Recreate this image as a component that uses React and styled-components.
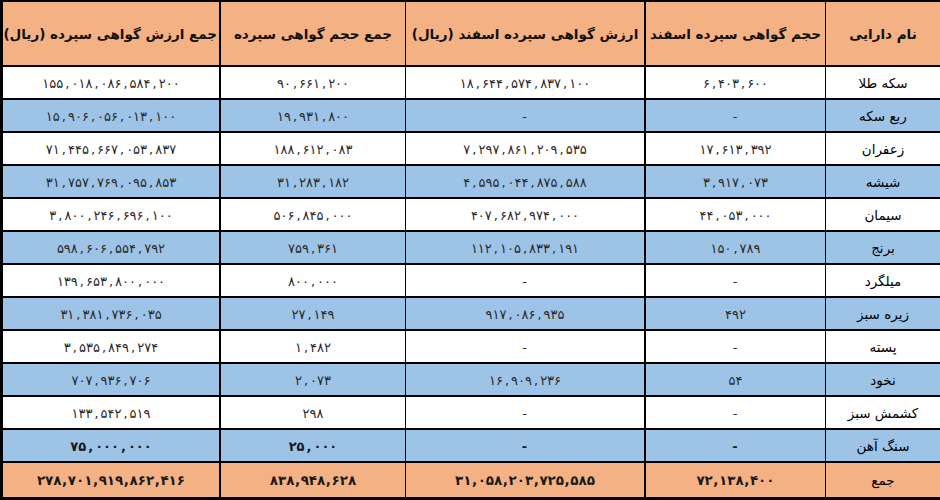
import React from 'react';
import styled, { createGlobalStyle } from 'styled-components';

const GlobalStyle = createGlobalStyle`
  html, body {
    margin: 0;
    padding: 0;
    background: #ffffff;
  }
  * {
    box-sizing: border-box;
  }
`;

// Excel-like palette
const ORANGE = '#f4b183';
const BLUE = '#9dc3e6';

const columns = [
  { key: 'name', title: 'نام دارایی', width: 115, edge: 1 },
  { key: 'volEsfand', title: 'حجم گواهی سپرده اسفند', width: 181, edge: 2 },
  { key: 'valEsfand', title: 'ارزش گواهی سپرده اسفند (ریال)', width: 239, edge: 1 },
  { key: 'volTotal', title: 'جمع حجم گواهی سپرده', width: 186, edge: 2 },
  { key: 'valTotal', title: 'جمع ارزش گواهی سپرده (ریال)', width: 219, edge: 3 },
];

const rows = [
  ['سکه طلا', '۶,۴۰۳,۶۰۰', '۱۸,۶۴۴,۵۷۴,۸۳۷,۱۰۰', '۹۰,۶۶۱,۲۰۰', '۱۵۵,۰۱۸,۰۸۶,۵۸۴,۲۰۰'],
  ['ربع سکه', '-', '-', '۱۹,۹۳۱,۸۰۰', '۱۵,۹۰۶,۰۵۶,۰۱۳,۱۰۰'],
  ['زعفران', '۱۷,۶۱۳,۳۹۲', '۷,۲۹۷,۸۶۱,۲۰۹,۵۳۵', '۱۸۸,۶۱۲,۰۸۳', '۷۱,۴۴۵,۶۶۷,۰۵۳,۸۳۷'],
  ['شیشه', '۳,۹۱۷,۰۷۳', '۴,۵۹۵,۰۴۴,۸۷۵,۵۸۸', '۳۱,۲۸۳,۱۸۲', '۳۱,۷۵۷,۷۶۹,۰۹۵,۸۵۳'],
  ['سیمان', '۴۴,۰۵۳,۰۰۰', '۴۰۷,۶۸۲,۹۷۴,۰۰۰', '۵۰۶,۸۴۵,۰۰۰', '۳,۸۰۰,۲۴۶,۶۹۶,۱۰۰'],
  ['برنج', '۱۵۰,۷۸۹', '۱۱۲,۱۰۵,۸۳۳,۱۹۱', '۷۵۹,۳۶۱', '۵۹۸,۶۰۶,۵۵۴,۷۹۲'],
  ['میلگرد', '-', '-', '۸۰۰,۰۰۰', '۱۳۹,۶۵۳,۸۰۰,۰۰۰'],
  ['زیره سبز', '۴۹۲', '۹۱۷,۰۸۶,۹۳۵', '۲۷,۱۴۹', '۳۱,۳۸۱,۷۳۶,۰۳۵'],
  ['پسته', '-', '-', '۱,۴۸۲', '۳,۵۳۵,۸۴۹,۲۷۴'],
  ['نخود', '۵۴', '۱۶,۹۰۹,۲۳۶', '۲,۰۷۳', '۷۰۷,۹۳۶,۷۰۶'],
  ['کشمش سبز', '-', '-', '۲۹۸', '۱۳۳,۵۴۲,۵۱۹'],
  ['سنگ آهن', '-', '-', '۲۵,۰۰۰', '۷۵,۰۰۰,۰۰۰', true],
];

const totals = ['جمع', '۷۲,۱۳۸,۴۰۰', '۳۱,۰۵۸,۲۰۳,۷۲۵,۵۸۵', '۸۳۸,۹۴۸,۶۲۸', '۲۷۸,۷۰۱,۹۱۹,۸۶۲,۴۱۶'];

const Table = styled.table`
  direction: rtl;
  width: 940px;
  table-layout: fixed;
  border-collapse: separate;
  border-spacing: 0;
  border-top: 2px solid #000;
  font-family: "DejaVu Sans", "Noto Sans", sans-serif;
  color: #111;
`;

const HeadCell = styled.th`
  width: ${p => p.$width}px;
  height: 65px;
  padding: 0 2px;
  background: ${ORANGE};
  border-bottom: 2px solid #000;
  border-left: ${p => p.$edge}px solid #000;
  font-size: 13.5px;
  font-weight: bold;
  text-align: center;
  white-space: nowrap;
  letter-spacing: 0.2px;
`;

const Row = styled.tr`
  background: ${p => (p.$shaded ? BLUE : '#ffffff')};
`;

const TotalRow = styled.tr`
  background: ${ORANGE};
`;

const Cell = styled.td`
  height: ${p => (p.$total ? 37 : 33)}px;
  padding: 0 2px;
  border-bottom: ${p => (p.$total ? 3 : 2)}px solid #000;
  border-left: ${p => p.$edge}px solid #000;
  text-align: center;
  white-space: nowrap;
  font-size: 13.5px;
  color: #000;
`;

const Num = styled.span`
  direction: ltr;
  unicode-bidi: isolate;
  display: inline-block;
  font-size: ${p => (p.$total ? 13.5 : 13)}px;
  font-weight: ${p => (p.$bold ? 'bold' : 'normal')};
  color: ${p => (p.$bold ? '#1a1a1a' : '#2a2a2a')};
  letter-spacing: ${p => (p.$total ? 1.1 : 0.9)}px;
`;

// thousands separator, spaced out like the spreadsheet font
const Sep = styled.span`
  margin: 0 ${p => (p.$total ? 0.5 : 2)}px;
`;

const Amount = ({ value, bold, total }) => {
  const parts = value.split(',');
  return (
    <Num $bold={bold} $total={total}>
      {parts.map((part, i) => (
        <React.Fragment key={i}>
          {i > 0 && <Sep $total={total}>,</Sep>}
          {part}
        </React.Fragment>
      ))}
    </Num>
  );
};

const App = () => (
  <>
    <GlobalStyle />
    <Table>
      <thead>
        <tr>
          {columns.map(col => (
            <HeadCell key={col.key} $width={col.width} $edge={col.edge}>
              {col.title}
            </HeadCell>
          ))}
        </tr>
      </thead>
      <tbody>
        {rows.map((row, i) => (
          <Row key={row[0]} $shaded={i % 2 === 1}>
            {columns.map((col, j) => (
              <Cell key={col.key} $edge={col.edge}>
                {j === 0 ? row[j] : <Amount value={row[j]} bold={row[5]} />}
              </Cell>
            ))}
          </Row>
        ))}
        <TotalRow>
          {columns.map((col, j) => (
            <Cell key={col.key} $edge={col.edge} $total>
              {j === 0 ? totals[j] : <Amount value={totals[j]} bold total />}
            </Cell>
          ))}
        </TotalRow>
      </tbody>
    </Table>
  </>
);

export default App;
